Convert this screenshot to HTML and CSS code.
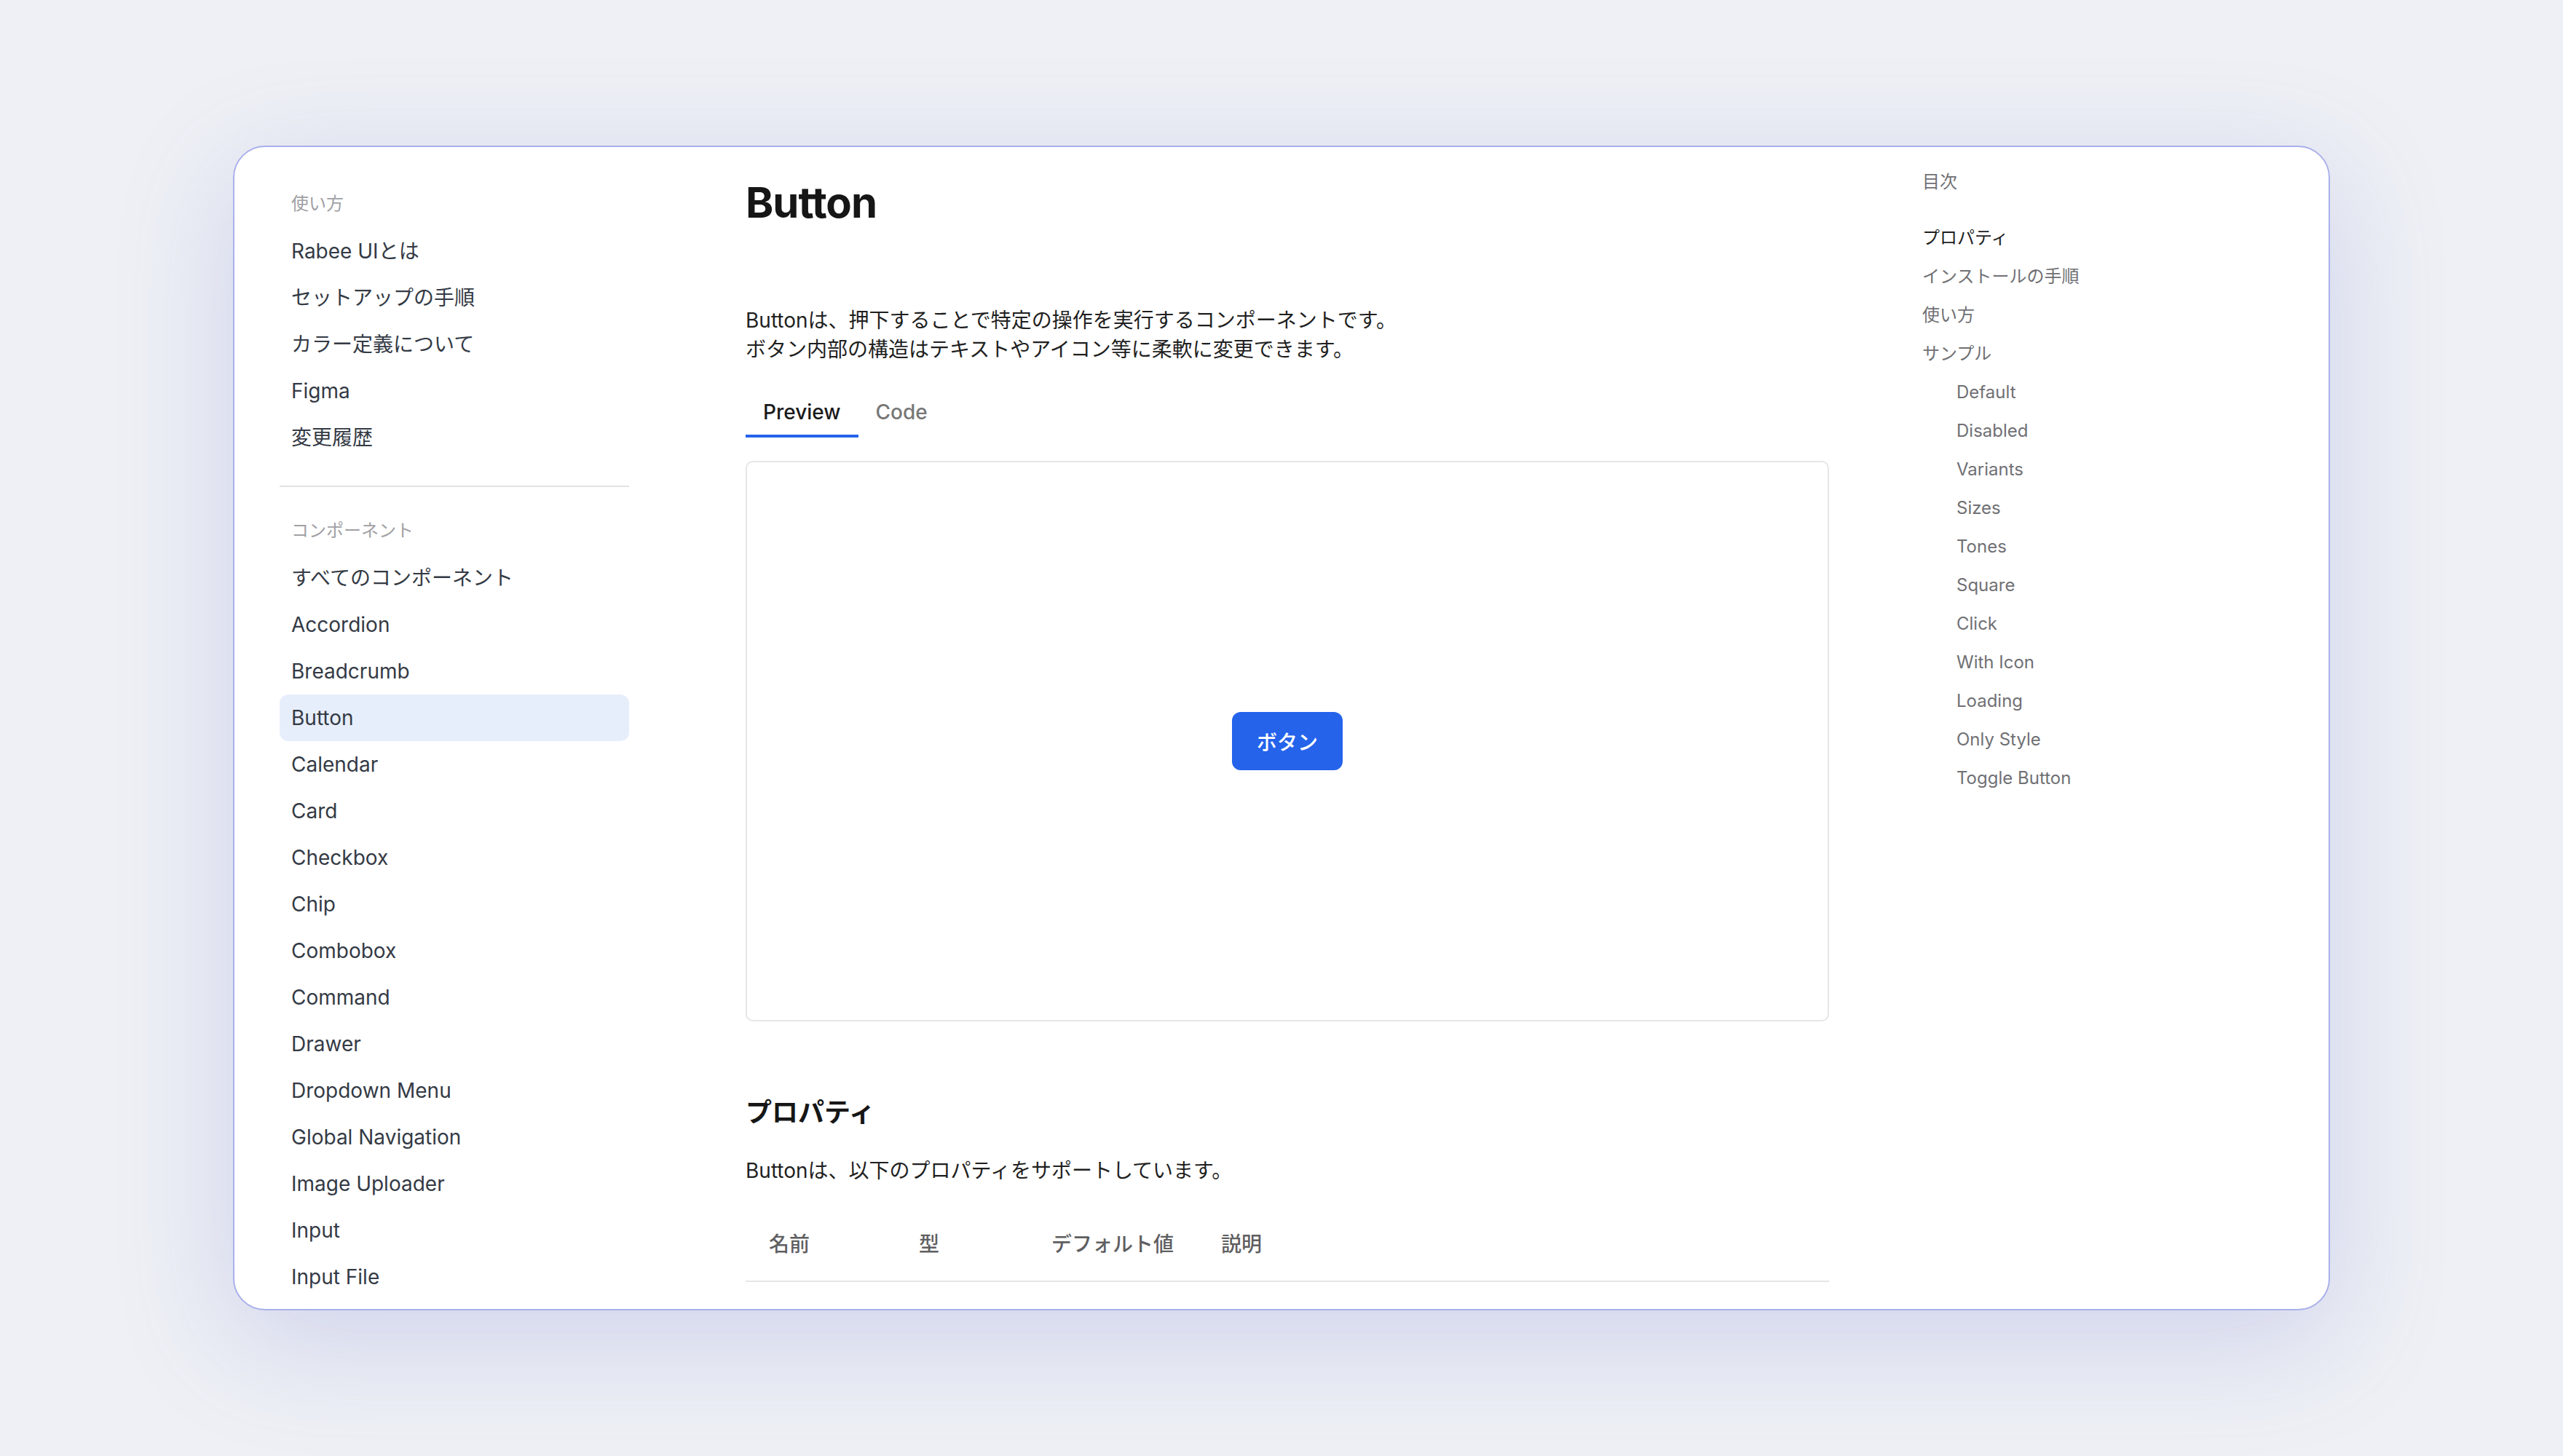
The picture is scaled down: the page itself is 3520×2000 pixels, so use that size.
FILE: index.html
```html
<!DOCTYPE html>
<html lang="ja">
<head>
  <meta charset="UTF-8">
  <title>Button - Rabee UI</title>
  <link rel="stylesheet" href="styles.css">
</head>
<body>
<div class="frame">
  <!-- 左ナビ -->
  <aside class="sidenav">
    <p class="sidenav-label">使い方</p>
    <ul class="sidenav-list">
      <li>Rabee UIとは</li>
      <li>セットアップの手順</li>
      <li>カラー定義について</li>
      <li>Figma</li>
      <li>変更履歴</li>
    </ul>
    <hr class="sidenav-divider">
    <p class="sidenav-label">コンポーネント</p>
    <ul class="sidenav-list">
      <li>すべてのコンポーネント</li>
      <li>Accordion</li>
      <li>Breadcrumb</li>
      <li class="current">Button</li>
      <li>Calendar</li>
      <li>Card</li>
      <li>Checkbox</li>
      <li>Chip</li>
      <li>Combobox</li>
      <li>Command</li>
      <li>Drawer</li>
      <li>Dropdown Menu</li>
      <li>Global Navigation</li>
      <li>Image Uploader</li>
      <li>Input</li>
      <li>Input File</li>
    </ul>
  </aside>

  <!-- 本文 -->
  <main class="doc">
    <h1 class="doc-title">Button</h1>
    <p class="doc-lead">Buttonは、押下することで特定の操作を実行するコンポーネントです。<br>ボタン内部の構造はテキストやアイコン等に柔軟に変更できます。</p>

    <div class="tabs">
      <span class="tab active">Preview</span>
      <span class="tab">Code</span>
    </div>
    <div class="preview">
      <button class="btn">ボタン</button>
    </div>

    <h2 class="doc-heading">プロパティ</h2>
    <p class="doc-text">Buttonは、以下のプロパティをサポートしています。</p>
    <table class="props">
      <thead>
        <tr>
          <th class="col-name">名前</th>
          <th class="col-type">型</th>
          <th class="col-default">デフォルト値</th>
          <th>説明</th>
        </tr>
      </thead>
    </table>
  </main>

  <!-- 目次 -->
  <nav class="toc">
    <p class="toc-title">目次</p>
    <ul class="toc-list">
      <li class="active">プロパティ</li>
      <li>インストールの手順</li>
      <li>使い方</li>
      <li>サンプル</li>
      <li class="sub">Default</li>
      <li class="sub">Disabled</li>
      <li class="sub">Variants</li>
      <li class="sub">Sizes</li>
      <li class="sub">Tones</li>
      <li class="sub">Square</li>
      <li class="sub">Click</li>
      <li class="sub">With Icon</li>
      <li class="sub">Loading</li>
      <li class="sub">Only Style</li>
      <li class="sub">Toggle Button</li>
    </ul>
  </nav>
</div>
</body>
</html>
```

FILE: styles.css
```css
* {
  padding: 0;
  margin: 0;
  box-sizing: border-box;
}

body {
  height: 2000px;
  padding-top: 200px;
  background: #eef0f5;
  font-family: Inter, "Noto Sans CJK JP", sans-serif;
  color: #1f1f1f;
  overflow: hidden;
}

ul {
  list-style: none;
}

.frame {
  width: 2880px;
  height: 1600px;
  margin: 0 auto;
  padding-left: 62px;
  display: flex;
  background: #fff;
  border: 2px solid #aab0ea;
  border-radius: 44px;
  box-shadow: 0 40px 160px rgba(96, 104, 200, 0.22);
  overflow: hidden;
}

/* 左ナビ */
.sidenav {
  width: 480px;
  flex-shrink: 0;
  padding-top: 62px;
}

.sidenav-label {
  padding: 0 16px;
  margin-bottom: 17px;
  font-size: 24px;
  line-height: 32px;
  color: #a0a0a4;
}

.sidenav-list li {
  height: 64px;
  padding: 0 16px;
  font-size: 28px;
  line-height: 64px;
  color: #343a45;
  border-radius: 12px;
  white-space: nowrap;
}

.sidenav-list li.current {
  background: #e7eefb;
}

.sidenav-divider {
  height: 2px;
  margin: 34px 0 44px;
  border: 0;
  background: #e3e3e6;
}

/* 本文 */
.doc {
  width: 1488px;
  flex-shrink: 0;
  margin-left: 160px;
  padding-top: 36px;
}

.doc-title {
  font-size: 58px;
  line-height: 80px;
  font-weight: 700;
  letter-spacing: -1px;
  color: #161616;
}

.doc-lead {
  margin-top: 102px;
  font-size: 28px;
  line-height: 40px;
}

.tabs {
  display: flex;
  margin-top: 35px;
}

.tab {
  padding: 0 24px;
  font-size: 28px;
  line-height: 62px;
  font-weight: 500;
  color: #777;
  border-bottom: 4px solid transparent;
}

.tab.active {
  color: #1a1a1a;
  border-bottom-color: #2563eb;
}

.preview {
  height: 770px;
  margin-top: 32px;
  display: flex;
  align-items: center;
  justify-content: center;
  border: 2px solid #e6e6e8;
  border-radius: 10px;
}

.btn {
  width: 152px;
  height: 80px;
  border: 0;
  border-radius: 12px;
  background: #2563eb;
  color: #fff;
  font-family: Inter, "Noto Sans CJK JP", sans-serif;
  font-size: 28px;
  font-weight: 500;
}

.doc-heading {
  margin-top: 101px;
  font-size: 36px;
  line-height: 48px;
  font-weight: 700;
  color: #161616;
}

.doc-text {
  margin-top: 36px;
  font-size: 28px;
  line-height: 40px;
}

.props {
  width: 100%;
  margin-top: 31px;
  border-collapse: collapse;
  table-layout: fixed;
}

.props th {
  padding: 30px 32px;
  font-size: 28px;
  line-height: 40px;
  font-weight: 500;
  color: #5f5f62;
  text-align: left;
  white-space: nowrap;
  border-bottom: 2px solid #e6e6e8;
}

.props .col-name {
  width: 206px;
}

.props .col-type {
  width: 182px;
}

.props .col-default {
  width: 233px;
}

/* 目次 */
.toc {
  flex: 1;
  margin-left: 128px;
  padding-top: 32px;
}

.toc-title {
  font-size: 24px;
  line-height: 32px;
  color: #707074;
}

.toc-list {
  margin-top: 34px;
}

.toc-list li {
  font-size: 24px;
  line-height: 53px;
  color: #707074;
}

.toc-list li.active {
  color: #1f1f1f;
}

.toc-list li.sub {
  padding-left: 47px;
}
```
